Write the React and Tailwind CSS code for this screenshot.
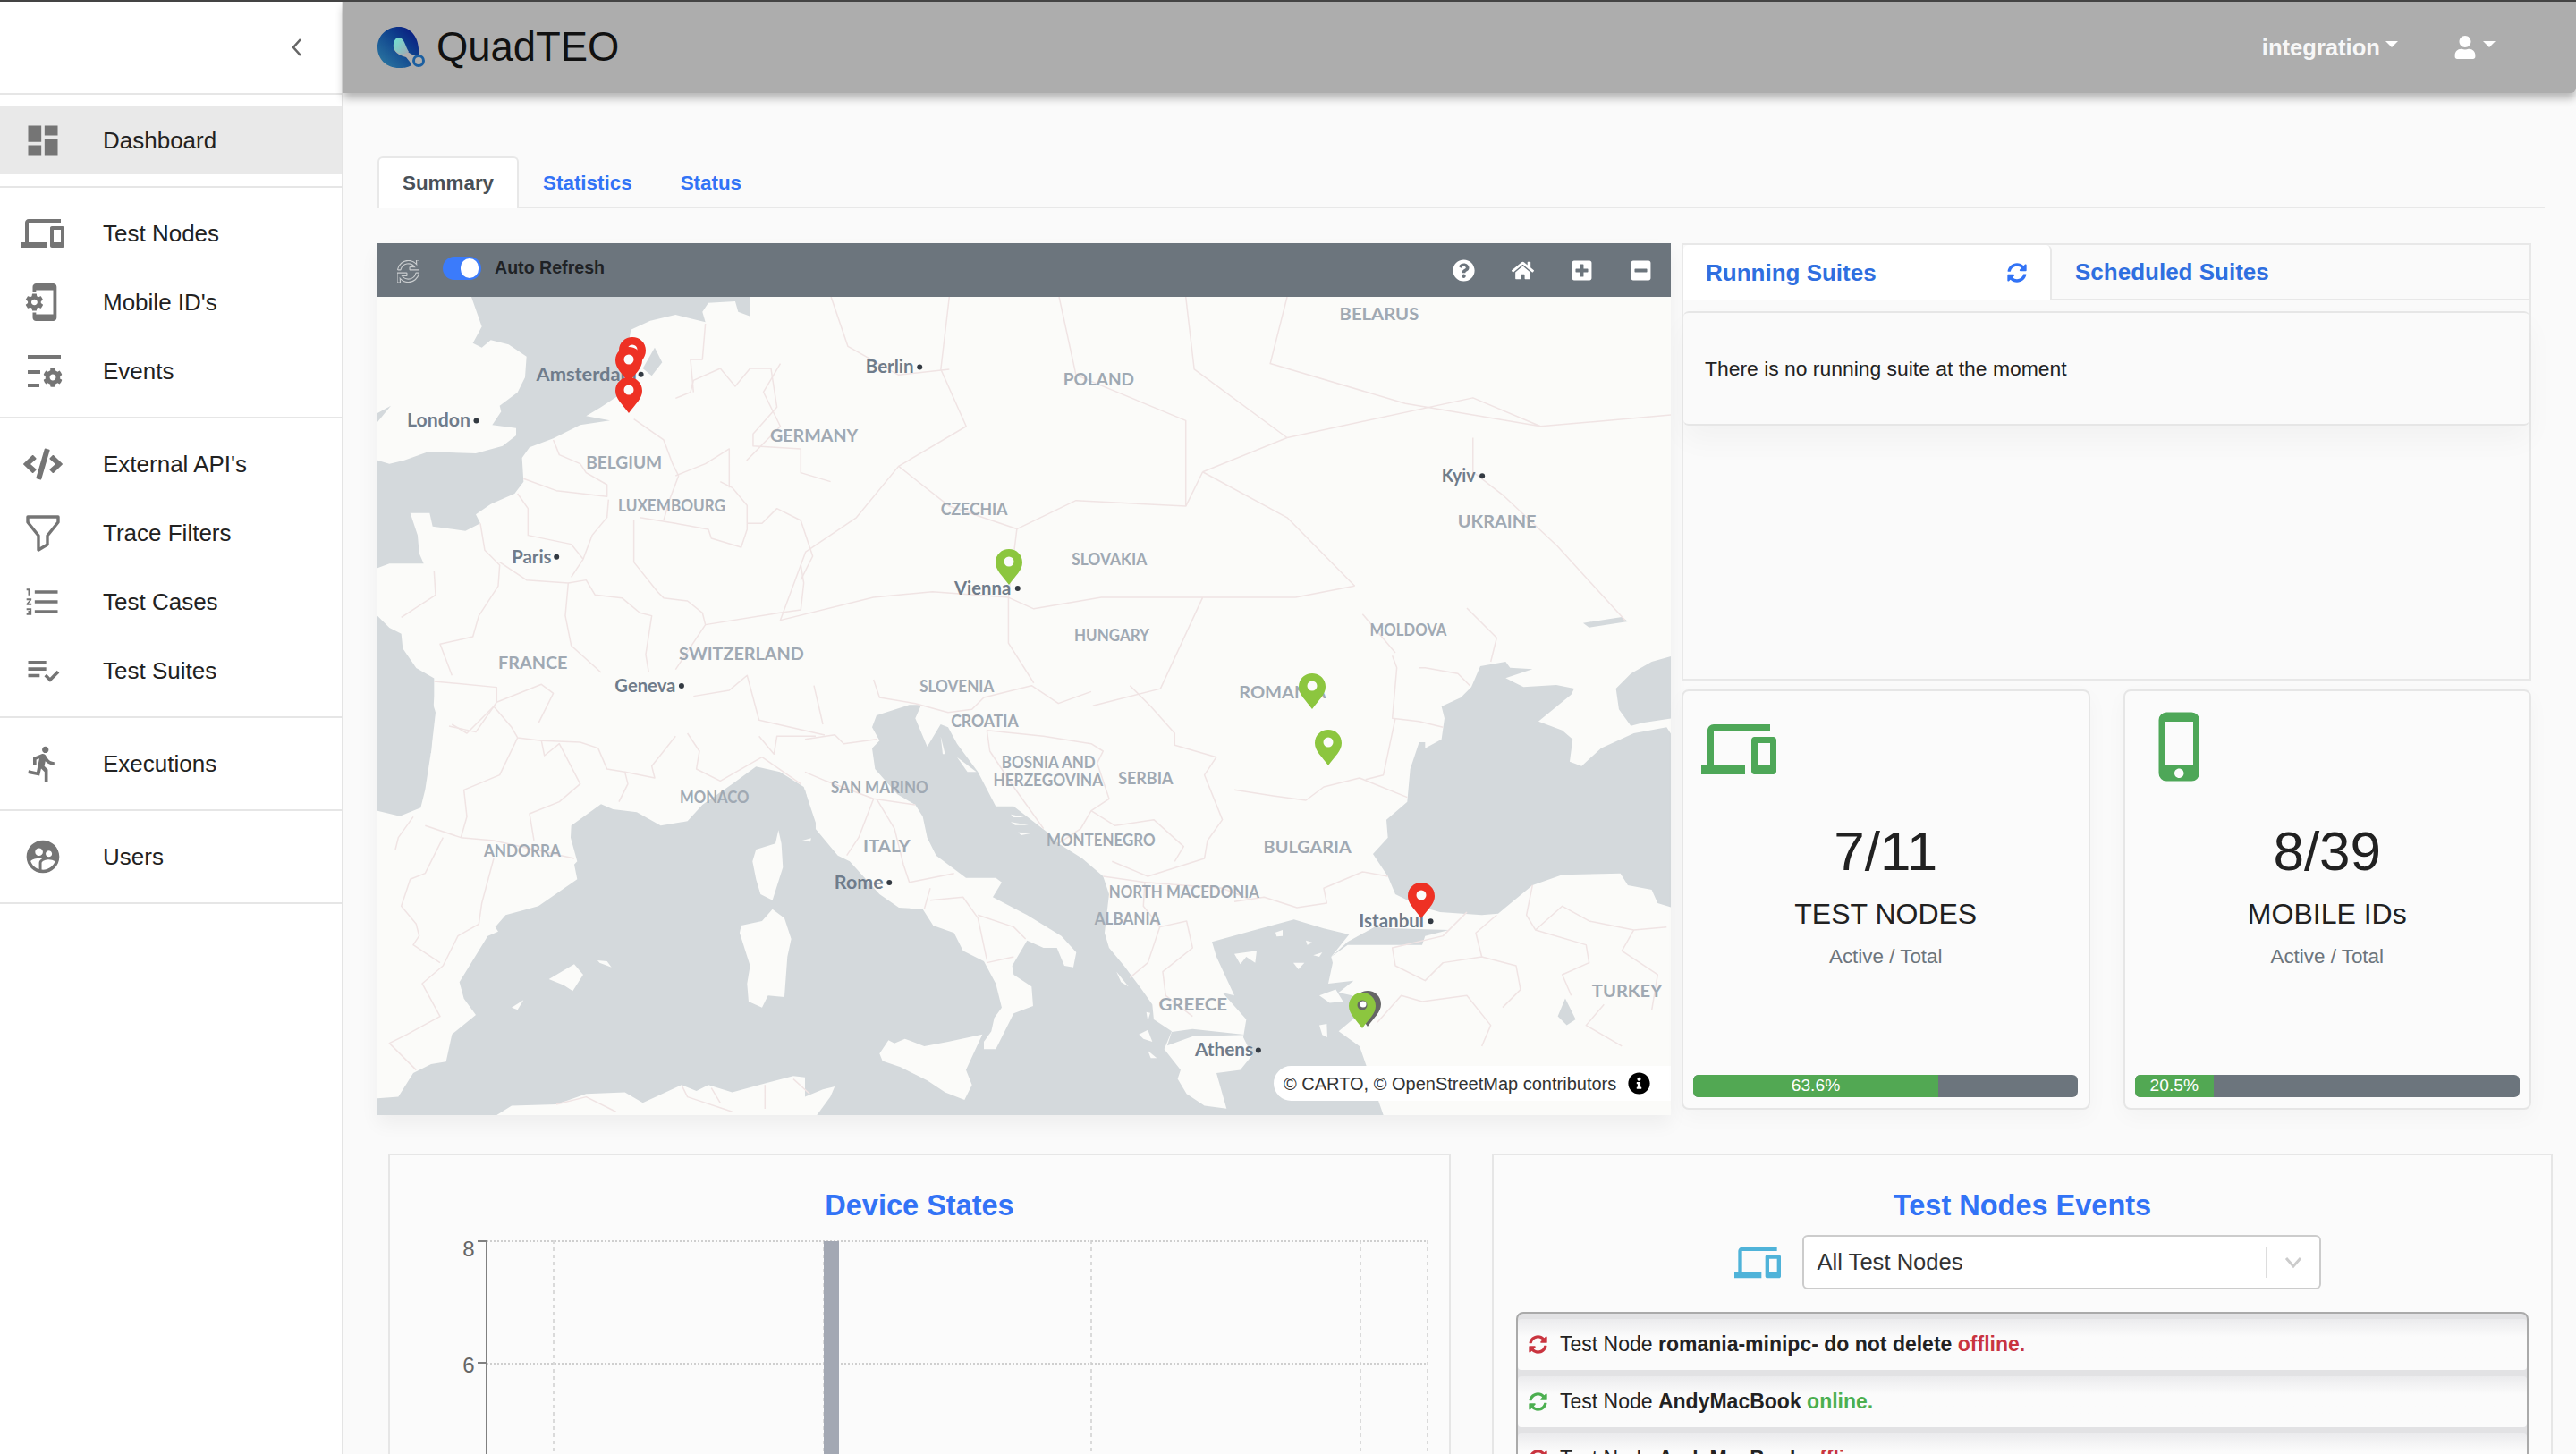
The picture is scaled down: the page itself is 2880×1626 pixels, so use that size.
import React from "react";
import { FaSync, FaSyncAlt, FaQuestionCircle, FaHome, FaPlusSquare, FaMinusSquare, FaCode, FaUser, FaCog, FaInfoCircle } from "react-icons/fa";
import {
  MdDashboard,
  MdDevices,
  MdPhonelinkSetup,
  MdFormatListNumbered,
  MdPlaylistAddCheck,
  MdDirectionsRun,
  MdSupervisedUserCircle,
  MdPhoneIphone,
} from "react-icons/md";

const EventsIcon = () => (
  <svg width="48" height="48" viewBox="0 0 48 48" fill="#757575">
    <rect x="7" y="6" width="37" height="4" />
    <rect x="7" y="23" width="14" height="4" />
    <rect x="7" y="38" width="13" height="4" />
    <foreignObject x="24" y="20" width="22" height="24">
      <FaCog size={22} color="#757575" />
    </foreignObject>
  </svg>
);

const FilterIcon = () => (
  <svg width="44" height="44" viewBox="0 0 44 44" fill="none" stroke="#757575" strokeWidth="3.4" strokeLinejoin="round">
    <path d="M5 4 H39 V10 L27 25 V35 L17 41 V25 L5 10 Z" />
  </svg>
);

const sections = [
  [{ label: "Dashboard", icon: <MdDashboard size={44} color="#757575" />, active: true }],
  [
    { label: "Test Nodes", icon: <MdDevices size={48} color="#757575" /> },
    { label: "Mobile ID's", icon: <MdPhonelinkSetup size={46} color="#757575" /> },
    { label: "Events", icon: <EventsIcon /> },
  ],
  [
    { label: "External API's", icon: <FaCode size={44} color="#757575" /> },
    { label: "Trace Filters", icon: <FilterIcon /> },
    { label: "Test Cases", icon: <MdFormatListNumbered size={44} color="#757575" /> },
    { label: "Test Suites", icon: <MdPlaylistAddCheck size={44} color="#757575" /> },
  ],
  [{ label: "Executions", icon: <MdDirectionsRun size={44} color="#757575" /> }],
  [{ label: "Users", icon: <MdSupervisedUserCircle size={44} color="#757575" /> }],
];

const Sidebar = () => (
  <aside className="w-[384px] shrink-0 bg-white border-r-2 border-[#e4e4e4]">
    <div className="h-[102px] flex items-center justify-end pr-[44px]">
      <svg width="12" height="20" viewBox="0 0 12 20" fill="none" stroke="#666" strokeWidth="2.6"><path d="M10 1 L2 10 L10 19" /></svg>
    </div>
    <div className="border-t-2 border-[#e6e6e6]" />
    {sections.map((group, i) => (
      <div key={i} className="pt-[12px] pb-[13px] border-b-2 border-[#e6e6e6]">
        {group.map((item) => (
          <div key={item.label} className={`h-[77px] flex items-center ${item.active ? "bg-[#e9e9e9]" : ""}`}>
            <div className="w-[48px] ml-[24px] mr-[43px] flex justify-center">{item.icon}</div>
            <span className="text-[26px] pt-[1px] text-[#222]">{item.label}</span>
          </div>
        ))}
      </div>
    ))}
  </aside>
);

const Logo = () => (
  <svg width="54" height="46" viewBox="0 0 54 46">
    <defs>
      <linearGradient id="lg1" x1="0" y1="1" x2="1" y2="0">
        <stop offset="0" stopColor="#2f7ea3" />
        <stop offset="0.6" stopColor="#0d3f8c" />
        <stop offset="1" stopColor="#0a0f7d" />
      </linearGradient>
      <linearGradient id="lg2" x1="0" y1="0" x2="1" y2="1">
        <stop offset="0" stopColor="#6fe3d2" />
        <stop offset="1" stopColor="#9fa8b4" />
      </linearGradient>
    </defs>
    <path d="M24 0 C36 0 45 10 46 24 L47 31 C42 33 38 31 34 28 C30 24 30 14 25 13 C19 12 16 20 19 26 C22 31 28 33 32 34 C36 39 38 41 38 43 C33 46 28 46 24 46 C10 46 0 36 0 23 C0 10 10 0 24 0 Z" fill="url(#lg1)" />
    <path d="M24 12 C30 12 31 22 35 28 L29 31 C22 30 18 26 18 21 C18 16 20 12 24 12 Z" fill="url(#lg2)" />
    <circle cx="46" cy="38" r="5.5" fill="none" stroke="#1c5fa0" strokeWidth="3" />
  </svg>
);

const Caret = () => <span className="inline-block w-0 h-0 border-x-[7px] border-x-transparent border-t-[7px] border-t-white" />;

const Header = () => (
  <header className="h-[102px] bg-[#adadad] flex items-center pl-[38px] pr-[90px] shadow-[0_6px_10px_rgba(0,0,0,0.28)] rounded-br-[6px] relative">
    <Logo />
    <span className="ml-[12px] text-[45.4px] text-[#111] leading-none">QuadTEO</span>
    <div className="ml-auto flex items-center text-white">
      <span className="text-[25.6px] font-bold text-[#f7f7f7]">integration</span>
      <span className="ml-[6px] mb-[6px] flex"><Caret /></span>
      <span className="ml-[62px]"><FaUser size={26} /></span>
      <span className="ml-[7px] mb-[6px] flex"><Caret /></span>
    </div>
  </header>
);

const Tabs = () => (
  <div className="ml-[38px] mr-[35px] mt-[71px] h-[58px] flex border-b-2 border-[#e8e8e8] text-[22.4px] font-bold">
    <div className="h-[58px] px-[26px] flex items-center bg-white border-x-2 border-t-2 border-[#e8e8e8] rounded-t-[6px] text-[#495057]">Summary</div>
    <div className="ml-[27px] pt-[3px] flex items-center text-[#3273f6]">Statistics</div>
    <div className="ml-[54px] pt-[3px] flex items-center text-[#3273f6]">Status</div>
  </div>
);

// labels were read off a crop stretched 1.059 x 1.568
const mx = (x) => (x - 23) / 1.059;
const my = (y) => (y - 113) / 1.568;

const countries = [
  ["BELARUS", 1162, 143, 1256], ["POLAND", 835, 258, 919], ["GERMANY", 488, 356, 592], ["BELGIUM", 270, 403, 360],
  ["LUXEMBOURG", 308, 478, 435], ["CZECHIA", 690, 484, 769], ["SLOVAKIA", 845, 572, 934], ["UKRAINE", 1302, 507, 1395],
  ["HUNGARY", 848, 706, 937], ["MOLDOVA", 1198, 697, 1289], ["SWITZERLAND", 380, 739, 528], ["FRANCE", 166, 755, 248],
  ["SLOVENIA", 665, 795, 753], ["ROMANIA", 1043, 806, 1146], ["CROATIA", 702, 857, 782], ["BOSNIA AND", 762, 928, 873],
  ["HERZEGOVINA", 752, 959, 882], ["SERBIA", 900, 956, 965], ["SAN MARINO", 560, 972, 675], ["MONACO", 381, 989, 463],
  ["BULGARIA", 1072, 1078, 1176], ["MONTENEGRO", 815, 1065, 944], ["ANDORRA", 149, 1083, 240], ["ITALY", 598, 1076, 654],
  ["NORTH MACEDONIA", 889, 1155, 1067], ["ALBANIA", 872, 1202, 950], ["GREECE", 948, 1353, 1029], ["TURKEY", 1461, 1330, 1544],
];

const cities = [
  ["Amsterdam", 211, 249, 335, 330], ["Berlin", 601, 236, 665, 658], ["London", 58, 330, 140, 133], ["Kyiv", 1283, 427, 1331, 1323],
  ["Paris", 182, 569, 235, 229], ["Vienna", 706, 624, 781, 773], ["Geneva", 304, 795, 383, 376], ["Rome", 564, 1140, 629, 622],
  ["Istanbul", 1185, 1208, 1270, 1262], ["Athens", 991, 1434, 1066, 1060],
];

// coast shapes, each list is in the pixels of one 3x crop of the map
const cropA = "scale(0.3333)";
const cropB = "translate(0 448) scale(0.3333)";
const cropC = "translate(478 428) scale(0.3333)";
const cropD = "translate(958 348) scale(0.3333)";

const water = [
  [cropA, "M315 0 L350 100 L320 155 L350 170 L380 145 L440 160 L500 200 L495 270 L470 320 L410 365 L415 385 L385 430 L465 440 L465 465 L420 500 L330 525 L170 520 L90 548 L40 560 L0 548 L0 910 L40 895 L155 895 L140 860 L135 800 L110 725 L175 725 L185 770 L295 785 L345 760 L330 730 L380 695 L460 660 L490 620 L485 540 L510 505 L590 475 L680 430 L780 415 L700 400 L750 370 L810 330 L850 270 L840 170 L850 110 L915 80 L1000 60 L1100 85 L1090 50 L1110 20 L1200 15 L1210 50 L1250 65 L1250 0 Z"],
  [cropA, "M930 170 L955 220 L920 265 L890 240 Z"],
  [cropA, "M0 420 L45 365 L0 390 Z"],
  [cropA, "M0 1070 L40 1110 L80 1130 L85 1180 L130 1245 L190 1280 L190 1340 L180 1530 L0 1530 Z"],
  [cropB, "M0 0 L180 0 L195 50 L180 180 L160 310 L145 370 L75 398 L0 380 Z"],
  [cropB, "M650 430 L750 358 L790 375 L870 385 L950 430 L1040 415 L1090 360 L1190 290 L1270 232 L1350 250 L1430 300 L1470 420 L1470 1290 L1440 1275 L1395 1270 L1300 1295 L1190 1325 L1110 1300 L1070 1320 L1020 1300 L890 1360 L830 1325 L700 1330 L600 1365 L450 1370 L400 1401 L0 1401 L0 1345 L70 1340 L120 1260 L180 1230 L230 1222 L250 1130 L330 1065 L290 1010 L275 955 L370 800 L405 785 L395 770 L430 730 L540 700 L670 610 L660 560 L670 550 L648 470 Z"],
  [cropC, "M0 370 L35 500 L110 590 L150 610 L250 720 L315 765 L395 770 L430 825 L500 850 L530 910 L600 945 L640 1020 L660 1100 L635 1135 L625 1180 L600 1215 L600 1240 L640 1240 L700 1120 L765 1095 L760 1030 L700 990 L695 960 L745 875 L800 900 L845 900 L870 960 L900 965 L910 915 L860 860 L745 790 L630 730 L660 680 L640 665 L540 665 L440 590 L410 530 L395 460 L370 420 L310 385 L235 300 L225 230 L250 205 L225 160 L240 120 L350 85 L390 85 L370 130 L410 225 L455 150 L480 160 L510 215 L580 310 L640 425 L700 425 L810 510 L850 550 L930 600 L1000 660 L1020 720 L1005 850 L1020 900 L1070 960 L1130 1040 L1165 1090 L1170 1140 L1230 1180 L1205 1240 L1260 1310 L1250 1340 L1280 1390 L1340 1430 L1420 1440 L1430 1461 L0 1461 Z"],
  [cropC, "M1230 1182 L1300 1172 L1480 1192 L1300 1197 L1215 1228 Z"],
  [cropD, "M695 330 L760 300 L795 265 L825 195 L910 180 L925 200 L1000 205 L910 235 L970 265 L1080 258 L1140 270 L1130 290 L1020 380 L1100 410 L1135 440 L1125 515 L1165 530 L1230 470 L1340 420 L1450 400 L1470 430 L1470 1005 L1420 990 L1400 945 L1320 930 L1295 890 L1100 895 L1000 930 L885 1025 L830 1030 L690 1020 L620 1000 L540 960 L515 900 L465 825 L515 770 L510 710 L540 685 L580 650 L590 540 L620 450 L640 450 L640 470 L695 440 L705 370 Z"],
  [cropD, "M1280 270 L1330 220 L1400 180 L1470 160 L1470 370 L1370 385 L1330 395 L1290 340 Z"],
  [cropD, "M1170 50 L1300 30 L1320 45 L1190 65 Z"],
  [cropD, "M325 1170 L380 1120 L470 1070 L540 1075 L720 1080 L640 1100 L630 1130 L520 1130 L380 1130 Z"],
  [cropD, "M50 1085 L200 1045 L300 1075 L385 1095 L325 1170 L330 1190 L315 1260 L400 1250 L350 1290 L395 1300 L410 1370 L350 1420 L420 1470 L500 1701 L-20 1701 L-60 1560 L20 1550 L60 1500 L30 1440 L40 1380 L-40 1290 L0 1300 L-60 1170 L-75 1120 L-40 1110 Z"],
  [cropD, "M1085 1370 L1110 1310 L1145 1380 L1115 1400 Z"],
];

const land = [
  [cropB, "M1345 445 L1355 490 L1360 570 L1325 680 L1285 660 L1270 610 L1258 550 L1270 510 L1335 490 Z"],
  [cropB, "M1325 710 L1365 740 L1388 810 L1375 870 L1365 1005 L1310 1000 L1290 1040 L1245 1020 L1240 960 L1250 900 L1215 790 L1220 765 L1290 750 Z"],
  [cropB, "M575 945 L660 895 L690 930 L655 985 L625 965 Z"],
  [cropB, "M738 882 L770 885 L785 905 L745 890 Z"],
  [cropB, "M450 1040 L490 1015 L470 1048 Z"],
  [cropB, "M1425 480 L1455 472 L1452 484 Z"],
  [cropC, "M0 1400 L60 1375 L100 1365 L85 1400 L40 1461 L0 1461 Z"],
  [cropC, "M250 1255 L280 1210 L300 1220 L335 1205 L400 1230 L480 1215 L595 1190 L540 1310 L560 1360 L535 1410 L470 1385 L410 1345 L320 1300 L260 1280 Z"],
  [cropC, "M690 452 L735 462 L700 462 Z"],
  [cropC, "M690 478 L750 488 L705 488 Z"],
  [cropC, "M715 512 L760 515 L725 522 Z"],
  [cropC, "M455 190 L470 250 L462 250 Z"],
  [cropC, "M510 260 L575 310 L545 310 Z"],
  [cropC, "M1045 980 L1085 1030 L1060 1015 Z"],
  [cropC, "M1120 1190 L1150 1175 L1165 1215 L1135 1205 Z"],
  [cropC, "M1150 1245 L1180 1270 L1160 1270 Z"],
  [cropC, "M1145 1115 L1158 1118 L1150 1145 Z"],
  [cropD, "M0 1160 L75 1150 L70 1190 L40 1170 L20 1195 Z"],
  [cropD, "M138 1088 L162 1080 L162 1100 L142 1102 Z"],
  [cropD, "M240 1115 L262 1122 L245 1130 Z"],
  [cropD, "M265 1165 L295 1155 L285 1170 Z"],
  [cropD, "M198 1190 L235 1190 L215 1212 Z"],
  [cropD, "M285 1300 L340 1280 L365 1320 L320 1325 Z"],
  [cropD, "M285 1400 L310 1395 L312 1440 L295 1432 Z"],
];

const borders = [
  [cropA, "M590 480 L610 530 L680 560 L700 590 L770 630 L770 670 L600 650 L490 610"],
  [cropA, "M775 680 L770 740 L720 800 L690 880 L650 940"],
  [cropA, "M470 660 L505 710 L505 800 L650 830 L690 880"],
  [cropA, "M345 760 L360 850 L410 900 L405 970 L340 1070 L320 1140 L210 1165 L250 1270"],
  [cropA, "M190 920 L195 1000 L80 1075"],
  [cropA, "M410 890 L500 950 L640 960 L630 1070 L650 1170 L750 1260"],
  [cropA, "M640 960 L700 950 L730 1000 L820 1010 L880 1060 L920 1070 L900 1200 L910 1260"],
  [cropA, "M860 750 L860 890 L940 990 L960 1010 L1040 1020 L1090 1060 L1100 1100 L1000 1250"],
  [cropA, "M1100 1100 L1350 1060 L1420 1050 L1430 960 L1420 900"],
  [cropA, "M880 740 L1000 760 L1110 780 L1120 810 L1220 840 L1240 780 L1240 700 L1190 640 L1150 620"],
  [cropA, "M1000 600 L1100 560 L1180 510 L1180 640"],
  [cropA, "M860 410 L960 480 L990 560 L1010 600 L980 680 L960 750"],
  [cropA, "M1000 340 L1050 320 L1060 280 L1150 240 L1200 300 L1250 240 L1320 240 L1340 370 L1260 460 L1260 500 L1420 510 L1420 590 L1520 620"],
  [cropA, "M1100 90 L1090 210 L1050 210 L1060 320"],
  [cropA, "M1240 760 L1290 760 L1340 710 L1420 750 L1460 870 L1420 950"],
  [cropA, "M190 1290 L400 1310 L400 1360 L330 1460 L240 1440"],
  [cropA, "M400 1360 L550 1300 L590 1330 L540 1430"],
  [cropA, "M1060 1340 L1180 1320 L1240 1270 L1280 1420 L1500 1470"],
  [cropB, "M250 90 L300 120 L390 30 L450 100 L470 135 L550 145 L560 195 L610 155 L680 290 L610 350 L510 390 L525 480"],
  [cropB, "M470 135 L410 260 L290 310 L300 400 L280 470 L390 480 L660 540"],
  [cropB, "M120 400 L70 470 L60 510 M160 430 L280 470 M220 470 L160 590 L110 610 L80 700 L130 760 L140 800 L120 830 L210 890"],
  [cropB, "M390 540 L350 690 L340 760 L270 800 L220 900 L150 960 L210 1070 L100 1130 L40 1160 L130 1250"],
  [cropB, "M550 145 L680 150 L740 170 L770 240 L830 250 L840 290 L810 350"],
  [cropB, "M1000 130 L920 230 L930 270 L830 250 M1040 120 L1080 180 L1070 240 L1150 280 L1290 200 L1420 290"],
  [cropB, "M1280 130 L1330 190 L1340 130 L1470 130"],
  [cropB, "M600 1365 L700 1340 L800 1390 M1020 1300 L1040 1340 L1190 1390 M1120 1310 L1150 1360 M1300 1300 L1300 1380 M1395 1280 L1450 1330"],
  [cropC, "M0 200 L100 185 L130 215 L240 200"],
  [cropC, "M30 20 L60 150 M230 0 L250 60 L370 80 L480 110 L560 100 L600 60 L760 20 L850 80 L960 40"],
  [cropC, "M610 170 L800 190 L960 215 L1000 240 L980 280 L1020 400 L960 440 L925 500 L850 550"],
  [cropC, "M610 170 L620 240 L700 360 L800 500"],
  [cropC, "M1090 20 L1160 90 L1240 180 L1240 220 L1380 260 L1340 320 L1400 470 L1350 540 L1340 600 L1150 660 L1030 610"],
  [cropC, "M960 440 L1040 490 L1170 470 L1270 560 L1240 610"],
  [cropC, "M1000 660 L1140 680 L1135 760 L1190 830 L1150 950 L1090 1000"],
  [cropC, "M1140 680 L1400 700 L1500 740"],
  [cropC, "M1190 830 L1280 810 L1300 900 L1200 980 L1210 1060 L1300 1130"],
  [cropC, "M230 400 L180 530 L140 590 M240 400 L300 500 L330 620 L350 680 L500 650"],
  [cropC, "M420 700 L400 770 M420 740 L530 730 L580 800 L610 940 M580 790 L700 830 L740 870 M610 950 L700 930"],
  [cropC, "M0 310 L70 340 L230 400 L370 420"],
  [cropD, "M530 160 L545 200 L530 370 L620 380 L700 400"],
  [cropD, "M0 610 L130 630 L240 645 L300 600 L420 570 L580 635"],
  [cropD, "M0 985 L100 970 L210 1005 L310 990 L300 940 L430 885 L515 900"],
  [cropD, "M540 370 L500 560 L440 575 M620 200 L640 200 L750 220 L790 260 M430 20 L540 150 M780 0 L880 100 L860 180"],
  [cropD, "M780 1020 L700 1100 L530 1140 L540 1200 L640 1250 L700 1190 L830 1170 L945 1200 L960 1280 L900 1340"],
  [cropD, "M880 1030 L810 1090 L830 1170 M1000 930 L980 1030 L1010 1080 L1180 1130 L1190 1190 L1100 1230 L1130 1300"],
  [cropD, "M1010 1080 L1100 1000 L1190 1050 L1340 1080 L1450 1070 M1340 1080 L1300 1150 L1420 1230 L1400 1350"],
  [cropD, "M830 1470 L860 1400 L780 1300 L630 1320 L560 1300 L480 1390 M1240 1330 L1180 1400 L1300 1470"],
  ["translate(-21.7 -72.1) scale(0.9443 0.6378)", "M700 113 L690 240 L720 340 L640 410 L700 480 L780 520 L850 470 L980 480 L1000 420"],
  ["translate(-21.7 -72.1) scale(0.9443 0.6378)", "M640 410 L590 500 L530 560 L500 680 L610 640 L680 630 L770 640 L800 660 L880 640 L1000 640"],
  ["translate(-21.7 -72.1) scale(0.9443 0.6378)", "M780 520 L770 640 L770 720 L800 790 M870 830 L950 800 L1000 640 L1110 640 L1180 620"],
  ["translate(-21.7 -72.1) scale(0.9443 0.6378)", "M1000 420 L1100 360 L1320 290 L1400 340 L1555 320 M980 113 L990 240 L1100 360 M1100 113 L1080 230 L1240 300 L1400 340"],
  ["translate(-21.7 -72.1) scale(0.9443 0.6378)", "M1320 360 L1320 420 L1355 460 L1420 550 L1500 680 M1180 620 L1100 500 L1000 420 M500 230 L480 280 L500 340 L460 400"],
  ["translate(-21.7 -72.1) scale(0.9443 0.6378)", "M560 113 L580 200 L640 250 L700 240 M830 113 L850 250 L980 330 L980 480"],
];

const Pin = ({ x, y, color, dark }) => (
  <g transform={`translate(${x - 15} ${y - 39})`}>
    {dark && <path d="M15 0 C23 0 30 6 30 15 C30 24 22 30 15 40 C8 30 0 24 0 15 C0 6 7 0 15 0 Z" transform="translate(6 -2)" fill="#666" />}
    <path d="M15 0 C23 0 30 6 30 15 C30 24 22 30 15 40 C8 30 0 24 0 15 C0 6 7 0 15 0 Z" fill={color} />
    <circle cx="15" cy="14" r="5.5" fill={dark ? "#666" : "#fbfbfb"} />
    {dark && <circle cx="16" cy="13" r="3.5" fill="#fff" />}
  </g>
);

const MapView = () => (
  <div className="relative h-[915px] bg-[#fbfbf9]">
    <svg width="1446" height="915" className="block">
      {water.map(([t, d]) => (
        <path key={d} transform={t} d={d} fill="#d4d9dc" />
      ))}
      {land.map(([t, d]) => (
        <path key={d} transform={t} d={d} fill="#fbfbf9" />
      ))}
      {borders.map(([t, d]) => (
        <path key={d} transform={t} d={d} fill="none" stroke="#f0e4e4" strokeWidth="1.5" strokeLinejoin="round" vectorEffect="non-scaling-stroke" />
      ))}
      {countries.map(([t, x, y, end]) => (
        <text key={t} x={mx(x)} y={my(y) + 7} textLength={(end - x) / 1.059} lengthAdjust="spacingAndGlyphs" fontFamily="Lato, sans-serif" fontSize="19" fontWeight="700" fill="#a0a9b3">{t}</text>
      ))}
      {cities.map(([t, x, y, dot, end]) => (
        <g key={t}>
          <text x={mx(x)} y={my(y) + 7} textLength={(end - x) / 1.059} lengthAdjust="spacingAndGlyphs" fontFamily="Lato, sans-serif" fontSize="20.5" fontWeight="700" fill="#6f7c8b">{t}</text>
          <circle cx={mx(dot)} cy={my(y)} r="3" fill="#333a42" />
        </g>
      ))}
      <Pin x={285} y={84} color="#ee3124" />
      <Pin x={281} y={95} color="#ee3124" />
      <Pin x={281} y={129} color="#ee3124" />
      <Pin x={706} y={321} color="#8cc63f" />
      <Pin x={1045} y={460} color="#8cc63f" />
      <Pin x={1063} y={523} color="#8cc63f" />
      <Pin x={1167} y={694} color="#ee3124" />
      <Pin x={1101} y={817} color="#8cc63f" dark />
    </svg>
    <div className="absolute right-0 bottom-[16px] h-[39px] w-[444px] bg-white rounded-l-[20px] flex items-center pl-[11px] text-[20px] text-[#333]">
      <span>© CARTO, © OpenStreetMap contributors</span>
      <span className="ml-[13px] flex"><FaInfoCircle size={25} color="#000" /></span>
    </div>
  </div>
);

const MapPanel = () => (
  <div className="w-[1446px] shrink-0 shadow-[0_10px_20px_rgba(0,0,0,0.05)]">
    <div className="h-[60px] bg-[#6c757d] flex items-center pl-[22px] pr-[21px]">
      <FaSync size={25} className="mt-[3px]" color="#6c757d" stroke="#c9ccce" strokeWidth={24} />
      <div className="ml-[26px] mb-[4px] w-[43px] h-[26px] rounded-full bg-[#3b7bfb] flex items-center justify-end pr-[3px]">
        <div className="w-[20px] h-[22px] rounded-full bg-white" />
      </div>
      <span className="ml-[15px] mb-[4px] text-[19.6px] font-bold text-[#1f2225]">Auto Refresh</span>
      <div className="ml-auto flex items-center gap-[41px] text-white">
        <FaQuestionCircle size={25} />
        <FaHome size={25} />
        <FaPlusSquare size={25} />
        <FaMinusSquare size={25} />
      </div>
    </div>
    <MapView />
  </div>
);

const SuitesPanel = () => (
  <div className="h-[489px] border-2 border-[#e8e8e8] bg-[#fafafa]">
    <div className="h-[62px] flex border-b-2 border-[#e8e8e8] text-[26px] font-bold text-[#2f6fe0]">
      <div className="w-[412px] h-[62px] pl-[25px] pr-[26px] flex items-center justify-between bg-white border-r-2 border-[#e8e8e8] rounded-t-[6px]">
        <span>Running Suites</span>
        <FaSyncAlt size={22} color="#3273f6" />
      </div>
      <div className="ml-[26px] flex items-center">Scheduled Suites</div>
    </div>
    <div className="mt-[12px] h-[128px] border-y-2 border-[#e6e6e6] rounded-[6px] bg-[#fafafa] flex items-center pl-[24px] text-[22.9px] text-[#222] shadow-[0_16px_32px_rgba(0,0,0,0.035)]">
      There is no running suite at the moment
    </div>
  </div>
);

const StatCard = ({ icon, value, title, pct, iconClass }) => (
  <div className="flex-1 h-[470px] border-2 border-[#e6e6e6] rounded-[8px] bg-[#fbfbfb] flex flex-col items-center relative shadow-[0_8px_24px_rgba(0,0,0,0.03)]">
    <div className={`self-start ${iconClass}`}>{icon}</div>
    <div className="absolute top-[141px] left-0 right-0 flex flex-col items-center">
      <div className="text-[62px] leading-[76px] text-[#212121]">{value}</div>
      <div className="mt-[13px] text-[32px] leading-[38px] text-[#212121]">{title}</div>
      <div className="mt-[15px] text-[22.4px] leading-[28px] text-[#6c757d]">Active / Total</div>
    </div>
    <div className="mt-auto mb-[12px] w-[430px] h-[25px] rounded-[6px] bg-[#6c757d] overflow-hidden flex">
      <div className="bg-[#52a853] h-full text-white text-[19.2px] flex items-center justify-center" style={{ width: `${pct}%` }}>
        {pct}%
      </div>
    </div>
  </div>
);

const DeviceChart = () => (
  <svg width="1184" height="240" className="block mt-[21px]" fill="none">
    {[0, 137].map((y) => (
      <line key={y} x1="108" x2="1160" y1={y + 1} y2={y + 1} stroke="#cfcfcf" strokeWidth="2" strokeDasharray="2 2" />
    ))}
    {[183, 485, 784, 1085, 1160].map((x) => (
      <line key={x} x1={x} x2={x} y1="0" y2="240" stroke="#cfcfcf" strokeWidth="1.5" strokeDasharray="4 4" />
    ))}
    <rect x="485" y="1" width="17" height="239" fill="#a3a8b3" />
    <line x1="108" x2="108" y1="0" y2="240" stroke="#808080" strokeWidth="2" />
    <line x1="98" x2="108" y1="1" y2="1" stroke="#808080" strokeWidth="2" />
    <line x1="98" x2="108" y1="137" y2="137" stroke="#808080" strokeWidth="2" />
    <text x="88" y="18" textAnchor="middle" fontSize="24" fill="#666" fontFamily="Liberation Sans, sans-serif">8</text>
    <text x="88" y="148" textAnchor="middle" fontSize="24" fill="#666" fontFamily="Liberation Sans, sans-serif">6</text>
  </svg>
);

const EventRow = ({ color, name, status }) => (
  <div className="h-[57px] mb-[7px] flex items-center pl-[12px] rounded-[4px] text-[23px] text-[#222] bg-linear-to-b from-[#ebebed] to-[#fbfbfb] to-35%">
    <FaSyncAlt size={21} color={color} />
    <span className="ml-[14px]">
      Test Node <b>{name}</b> <b style={{ color }}>{status}</b>
    </span>
  </div>
);

const BottomCards = () => (
  <div className="ml-[50px] mt-[43px] flex gap-[46px]">
    <div className="w-[1188px] shrink-0 border-2 border-[#e6e6e6] bg-[#fbfbfb] pt-[38px] h-[400px]">
      <div className="text-center text-[32.5px] leading-[36px] font-bold text-[#3273f6]">Device States</div>
      <DeviceChart />
    </div>
    <div className="w-[1186px] shrink-0 border-2 border-[#e6e6e6] bg-[#fbfbfb] pt-[38px] h-[400px] px-[25px]">
      <div className="text-center text-[32.5px] leading-[36px] font-bold text-[#3273f6]">Test Nodes Events</div>
      <div className="mt-[15px] flex items-center justify-center ml-[11px]">
        <MdDevices size={52} color="#4fb3d9" />
        <div className="ml-[24px] w-[580px] h-[61px] bg-white border-2 border-[#cccccc] rounded-[6px] flex items-center pl-[15px] text-[25.6px] text-[#333]">
          All Test Nodes
          <div className="ml-auto h-[34px] border-l-2 border-[#ddd]" />
          <svg width="22" height="14" viewBox="0 0 22 14" className="mx-[18px]" fill="none" stroke="#ccc" strokeWidth="3"><path d="M3 2 L11 11 L19 2" /></svg>
        </div>
      </div>
      <div className="mt-[25px] border-2 border-[#aaaaaa] rounded-[8px] pt-[6px] pb-[20px] bg-[#e2e2e4]">
        <EventRow color="#c9343f" name="romania-minipc- do not delete" status="offline." />
        <EventRow color="#4caf50" name="AndyMacBook" status="online." />
        <EventRow color="#c9343f" name="AndyMacBook" status="offline." />
      </div>
    </div>
  </div>
);

const App = () => {
  return (
    <div className="h-[1626px] overflow-hidden border-t-2 border-[#444] bg-[#fafafa] flex [font-family:'Liberation_Sans',Arial,sans-serif]">
      <Sidebar />
      <main className="flex-1 min-w-0">
        <Header />
        <Tabs />
        <div className="ml-[38px] mt-[39px] flex gap-[12px] items-start">
          <MapPanel />
          <div className="w-[950px] shrink-0">
            <SuitesPanel />
            <div className="mt-[10px] flex gap-[37px]">
              <StatCard
                value="7/11"
                title="TEST NODES"
                pct={63.6}
                iconClass="ml-[20px] mt-[23px]"
                icon={<MdDevices size={84} color="#4ea758" />}
              />
              <StatCard
                value="8/39"
                title="MOBILE IDs"
                pct={20.5}
                iconClass="ml-[20px] mt-[20px]"
                icon={<MdPhoneIphone size={84} color="#4ea758" />}
              />
            </div>
          </div>
        </div>
        <BottomCards />
      </main>
    </div>
  );
};

export default App;
